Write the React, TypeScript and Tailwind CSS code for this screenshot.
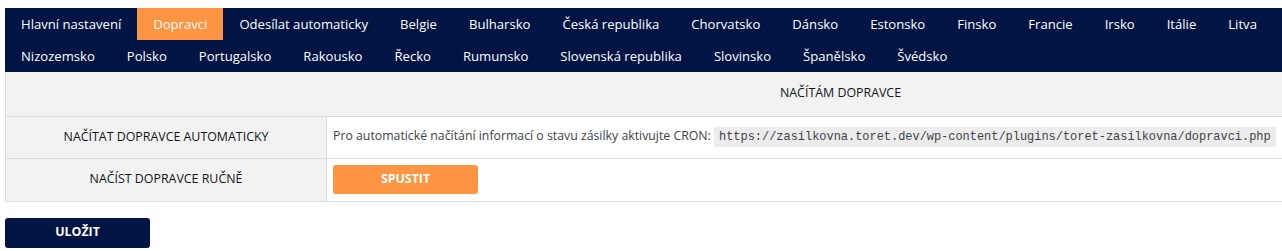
import React from "react";

const rowOne = [
  "Hlavní nastavení",
  "Dopravci",
  "Odesílat automaticky",
  "Belgie",
  "Bulharsko",
  "Česká republika",
  "Chorvatsko",
  "Dánsko",
  "Estonsko",
  "Finsko",
  "Francie",
  "Irsko",
  "Itálie",
  "Litva",
];

const rowTwo = [
  "Nizozemsko",
  "Polsko",
  "Portugalsko",
  "Rakousko",
  "Řecko",
  "Rumunsko",
  "Slovenská republika",
  "Slovinsko",
  "Španělsko",
  "Švédsko",
];

const cronUrl =
  "https://zasilkovna.toret.dev/wp-content/plugins/toret-zasilkovna/dopravci.php";

function Tab({ label, active }: { label: string; active?: boolean }) {
  return (
    <li>
      <a
        href="#"
        className={
          "block h-8 px-4 leading-8 text-[13.1px] text-white whitespace-nowrap " +
          (active ? "bg-[#ff9443]" : "")
        }
      >
        {label}
      </a>
    </li>
  );
}

export default function App() {
  return (
    <div className="w-[1282px] h-[251px] overflow-hidden bg-white font-['Open_Sans',sans-serif]">
      <div className="w-[1355px] pl-[5px] pt-2">
        <nav className="bg-[#001543]">
          <ul className="flex h-8">
            {rowOne.map((t) => (
              <Tab key={t} label={t} active={t === "Dopravci"} />
            ))}
          </ul>
          <ul className="flex h-8">
            {rowTwo.map((t) => (
              <Tab key={t} label={t} />
            ))}
          </ul>
        </nav>

        <table className="w-full border-collapse text-[12.4px] text-[#101517]">
          <tbody>
            <tr className="h-[44px] bg-[#f2f2f2]">
              <th className="w-[321px] border-l border-[#dcdcdc]"></th>
              <th className="font-medium uppercase text-center">Načítám dopravce</th>
            </tr>
            <tr className="h-[42px]">
              <th className="font-medium uppercase text-center bg-[#f2f2f2] border border-[#dcdcdc]">
                Načítat dopravce automaticky
              </th>
              <td className="border border-[#dcdcdc] px-[6px] text-[12.3px] text-[#3c434a] whitespace-nowrap">
                Pro automatické načítání informací o stavu zásilky aktivujte CRON:{" "}
                <code className="bg-[#ececec] px-[5px] py-[3px] font-['Liberation_Mono',monospace] text-[11.95px] text-[#3c434a]">
                  {cronUrl}
                </code>
              </td>
            </tr>
            <tr className="h-[43px]">
              <th className="font-medium uppercase text-center bg-[#f2f2f2] border border-[#dcdcdc]">
                Načíst dopravce ručně
              </th>
              <td className="border border-[#dcdcdc] px-[6px]">
                <button className="w-[145px] h-[29px] rounded-[3px] bg-[#ff9443] text-white text-[12.4px] font-bold">
                  SPUSTIT
                </button>
              </td>
            </tr>
          </tbody>
        </table>

        <button className="mt-4 w-[145px] h-[30px] rounded-[3px] bg-[#001543] text-white text-[12.4px] font-bold">
          ULOŽIT
        </button>
      </div>
    </div>
  );
}
